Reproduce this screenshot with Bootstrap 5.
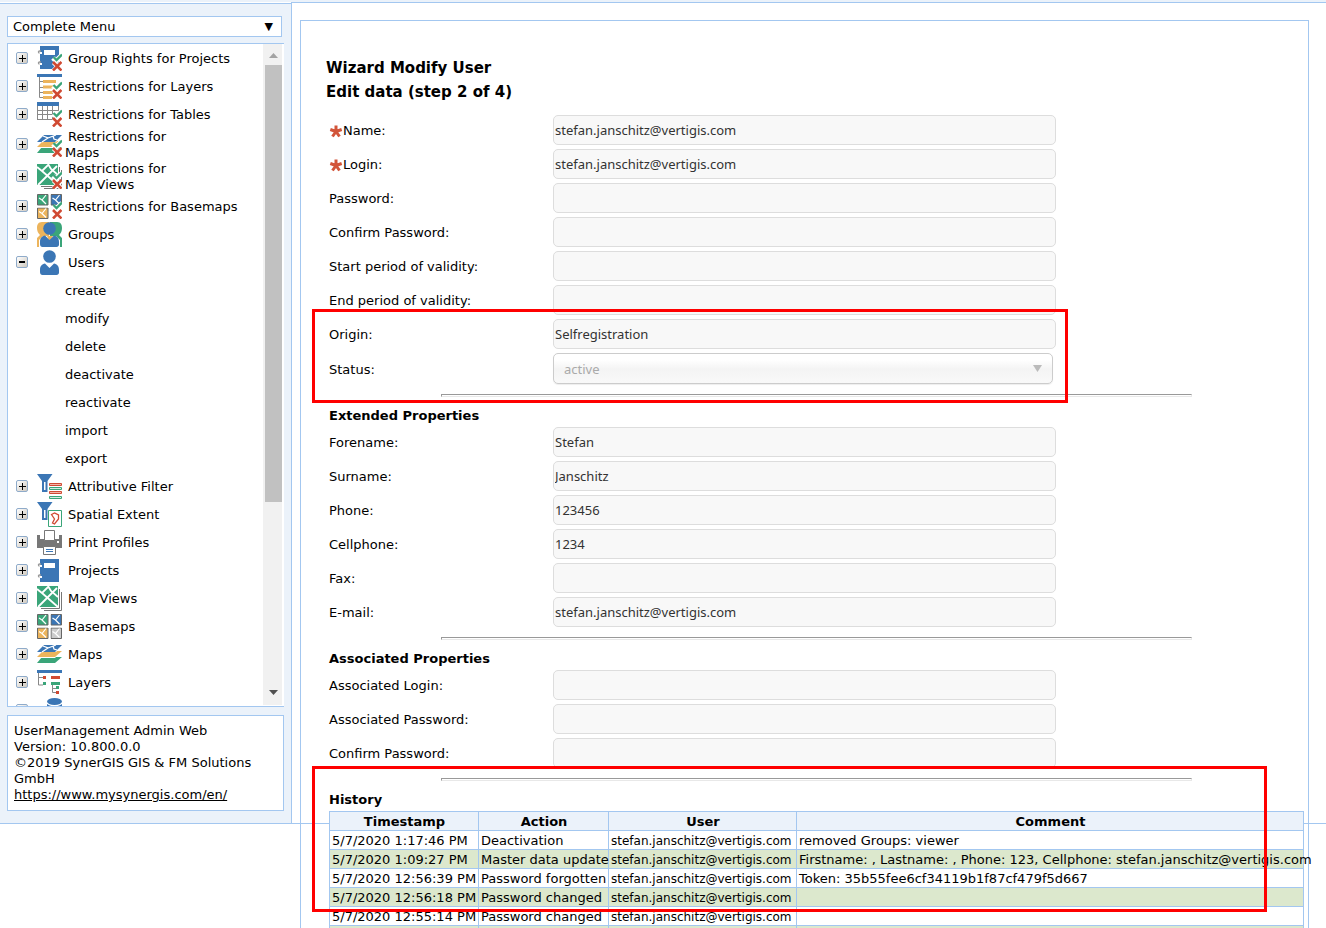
<!DOCTYPE html>
<html lang="en">
<head>
<meta charset="utf-8">
<meta name="viewport" content="width=device-width, initial-scale=1">
<title>UserManagement Admin Web</title>
<link href="https://cdn.jsdelivr.net/npm/bootstrap@5.3.0/dist/css/bootstrap.min.css" rel="stylesheet">
<style>
:root{--line:#a3c7f0;--panel:#ebf2fa}
html,body{height:100vh}
body{font:13px/16px "DejaVu Sans",Verdana,sans-serif;color:#000;background:#fff;overflow:hidden}
.topstrip{height:2px;background:var(--panel)}
.shell{height:calc(100vh - 106px)}
.frame-bottom{border-bottom:1px solid var(--line)}
.side{width:291px;background:var(--panel);padding:12px 7px 12px;margin-top:1px;border-top:1px solid var(--line);flex:none}
.main{border-left:1px solid var(--line);border-top:1px solid var(--line);padding:17px 17px 0 8px;min-width:0}
.panel{border:1px solid var(--line);border-bottom:0;padding:35px 4px 0 25px;min-height:calc(100vh - 20px)}
.menusel{width:275px;height:21px;border:1px solid var(--line);border-radius:0;padding:0 5px;appearance:none;background:#fff;color:#000;font:inherit;display:block}
.menuarrow{right:11px;top:3px;font-size:11px;pointer-events:none}
.box{background:#fff;border:1px solid var(--line)}
.tree{margin:6px 0 8px;min-height:0;border-right:0}
.nodes{overflow:hidden;min-height:0}
.node{height:28px;padding-left:8px;flex:none}
.node.tall{height:32px}
.node a,.leaf{color:#000;text-decoration:none}
.node a{text-indent:3px;margin-left:3px;max-width:180px;padding-top:2px}
.node .ico{margin-left:9px;width:25px;height:25px;flex:none}
.leaf{height:28px;line-height:30px;padding-left:57px;flex:none}
.exp{width:12px;height:12px;padding:0;border:1px solid #8fabca;border-radius:2px;background:linear-gradient(135deg,#fff,#cfc9bf);position:relative;flex:none}
.exp::before,.exp.plus::after{content:"";position:absolute;background:#000;left:2px;top:4px;width:6px;height:2px}
.exp.plus::before{height:1px;left:2px;top:5px;width:7px}
.exp.plus::after{width:1px;height:7px;left:5px;top:2px}
.sbar{width:19px;background:#f1f1f1;margin-bottom:1px;margin-right:2px;padding:0 0 9px 2px}
.thumb{background:#c1c1c1;flex:0 0 67%}
.info{padding:7px 6px}
.info a{color:#000}
h1{font-size:15px;line-height:24px;font-weight:700;margin:0}
h2{font-size:13px;line-height:20px;font-weight:700;margin:0}
.fields{padding:11px 0 0 3px}
.frow{margin-bottom:4px}
.fields label{width:224px;flex:none;padding-top:2px}
.txt{width:503px;height:30px;border:1px solid #ddd;border-radius:5px;background:#f8f8f8;color:#333;font:13px/20px "Noto Sans",sans-serif;padding:0 1px}
.pick{width:500px}
.pick select{width:100%;height:31px;border:1px solid #ccc;border-radius:5px;background:linear-gradient(#fff 20%,#f4f4f4 52%,#f9f9f9);color:#aaa;opacity:1;font:13px/20px "Noto Sans",sans-serif;padding:0 10px;appearance:none;display:block;box-shadow:0 1px 1px #eee}
.pick svg{right:11px;top:12px}
.rule{width:77%;height:3px;margin:10px auto 9px;border:1px solid #e8e8e8;border-top-color:#999;border-left-color:#999;opacity:1;background:#fff}
.sect{padding-bottom:1px}
.mark-red{border:3px solid #f00;left:-17px;pointer-events:none}
.mark-a{top:-10px;width:756px;height:94px}
.mark-b{top:-12px;right:37px;height:146px}
.log{width:100%;table-layout:fixed;border-collapse:collapse;background:#fff}
.log th,.log td{border:1px solid var(--line);padding:2px 1px 0 2px;height:19px;white-space:nowrap;line-height:16px}
.log th{background:var(--panel);text-align:center}
.log td:nth-child(3){font-size:12px}
.log tbody tr:nth-child(even){background:#dce8cd}
.w1{width:149px}.w2{width:130px}.w3{width:188px}
</style>
</head>
<body>
<svg class="d-none" aria-hidden="true">
<defs>
<symbol id="deny" viewBox="0 0 25 25"><path d="M16 12l3 3 6-6" fill="none" stroke="#fff" stroke-width="5"/><path d="M16.500 11l3 3 5.500-5.500" fill="none" stroke="#3aa579" stroke-width="2.300"/><path d="M16.500 16.500l8 8m0-8l-8 8" stroke="#fff" stroke-width="4.500"/><path d="M16 16l8.500 8.500m0-8.500l-8.500 8.500" stroke="#d04a33" stroke-width="2.600"/></symbol>
<symbol id="book" viewBox="0 0 25 25"><path fill="#3b76b5" d="M3 1h19v23H3z"/><path fill="#fff" d="M7 5h11v5H7zM3 7h2v2H3zm0 11h2v2H3z"/><path d="M4 6H2.500a1 1 0 1 0 0 2M4 17H2.500a1 1 0 1 0 0 2" fill="none" stroke="#999" stroke-width="1.400"/></symbol>
<symbol id="rlayers" viewBox="0 0 25 25"><path fill="#3b76b5" d="M0 0h25v3H0z"/><path d="M2.500 3v20.500M2.500 7.500H6M2.500 13.500H6M2.500 23.500H6M2.500 18.500H6" stroke="#888" fill="none"/><path d="M6 7.500h13M6 13h11M6 18.500h10M6 23.500h9" stroke="#ecb45c" stroke-width="3"/></symbol>
<symbol id="rtables" viewBox="0 0 25 25"><path fill="#fff" d="M.5 3h21v14H.5z"/><path d="M.5 4v13.500M5.500 4v13.500M10.500 4v13.500M15.500 4v13.500M21.500 4v10M0 8.500h22M0 12.500h22M0 17.500h16" stroke="#888" fill="none"/><path fill="#3b76b5" d="M0 0h22v4H0z"/></symbol>
<symbol id="maps" viewBox="0 0 25 25"><path fill="#3aa579" d="M5 15h20l-7 6H0z"/><path d="M7 9h18l-7 7H0z" fill="#fff"/><path fill="#ecb45c" d="M6 9h19l-7 6H0z"/><path fill="#fff" d="M6 4h19l-6 6H0z"/><path fill="#3b76b5" d="M7 3h18l-7 7H0z"/><path d="M6 4l5 2-6 4M11 6l8-3M16 4l1 3 3 1" stroke="#fff" stroke-width="1.300" fill="none"/></symbol>
<symbol id="views" viewBox="0 0 25 25"><path d="M22.500 3v19.500H4M24.500 6v18.500H7" fill="none" stroke="#777"/><path fill="#3aa579" d="M0 0h21v21H0z"/><path d="M0 3l5 4 7-7M5 7l16 14M11 0l3 5 7 6M1 21L20 2" fill="none" stroke="#fff" stroke-width="1.800"/></symbol>
<symbol id="tile" viewBox="0 0 12 12"><path d="M.5.5h10.500v10.500H.5z" fill="currentColor" stroke="#666"/><path d="M2 4l3 2 4-5M5 6l4 4" fill="none" stroke="#fff" stroke-width="1.200"/></symbol>
<symbol id="base" viewBox="0 0 25 25"><use href="#tile" width="12" height="12" color="#3aa579"/><use href="#tile" x="13.500" width="12" height="12" color="#3b76b5"/><use href="#tile" y="13.500" width="12" height="12" color="#ecb45c"/><use href="#tile" x="13.500" y="13.500" width="12" height="12" color="#ccc"/></symbol>
<symbol id="base3" viewBox="0 0 25 25"><use href="#tile" width="12" height="12" color="#3aa579"/><use href="#tile" x="13.500" width="12" height="12" color="#3b76b5"/><use href="#tile" y="13.500" width="12" height="12" color="#ecb45c"/></symbol>
<symbol id="user" viewBox="0 0 25 25"><circle cx="12.500" cy="6.500" r="6.300"/><path d="M3 25v-5c0-4 2-6 5-6.500l4.500 4.500 4.500-4.500c3 .5 5 2.500 5 6.500v2.500c0 1.500-1 2.500-2.500 2.500h-14C4 25 3 24 3 22z"/></symbol>
<symbol id="groups" viewBox="0 0 25 25"><path fill="#ecb45c" d="M12 0H5C1 0 0 3 0 6c0 3 1 5 3 7l-3 3v9h12z"/><path fill="#3aa579" d="M13 0h7c4 0 5 3 5 6 0 3-1 5-3 7l3 3v9H13z"/><path fill="#fff" d="M2 25v-7l4-4h13l4 4v7z"/><path fill="#ecb45c" d="M10 14h6l-3.500 6z"/><use href="#user" width="25" height="25" fill="#3b76b5"/></symbol>
<symbol id="funnel" viewBox="0 0 25 25"><path fill="#3b76b5" d="M0 0h15.500L10.500 7v11H5V7z"/><path fill="#fff" d="M7 8h1.500v8H7z"/></symbol>
<symbol id="attr" viewBox="0 0 25 25"><use href="#funnel" width="25" height="25"/><path fill="#fff" d="M12 8h13v17H12z"/><path d="M12.500 9.500h12v2h-12zM12.500 17.500h12v2h-12z" fill="#f0b5aa" stroke="#d04a33"/><path d="M12.500 13.500h12v2h-12zM12.500 22.500h12v2h-12z" fill="#d5eee4" stroke="#3aa579"/></symbol>
<symbol id="spatial" viewBox="0 0 25 25"><use href="#funnel" width="25" height="25"/><path d="M11.500 8.500h13v16h-13z" fill="#fff" stroke="#3aa579"/><path d="M14.500 12.500l3-1.500 4 2v4l-4 5-2-1 2-4z" fill="none" stroke="#d04a33" stroke-width="1.300"/></symbol>
<symbol id="print" viewBox="0 0 25 25"><path fill="#777" d="M0 5h3v4h19V5h3v13H0z"/><path d="M7.500.5h10v10h-10z" fill="#fff" stroke="#777"/><path d="M6.500 16.500h12v8h-12z" fill="#fff" stroke="#777"/><path d="M9 19.500h7M9 21.500h7" stroke="#3b76b5"/><path fill="#fff" d="M20 11h2v2h-2z"/></symbol>
<symbol id="layers" viewBox="0 0 25 25"><path fill="#3b76b5" d="M0 0h25v3H0z"/><path d="M1.500 3v12H6M1.500 7.500H6M15.500 14v8.500H19M15.500 18.500H19" fill="none" stroke="#888"/><path fill="#d04a33" d="M6 6h3v3H6zm8 0h9v3h-9zm5 15h3v3h-3z"/><path fill="#3aa579" d="M6 12h3v3H6zm8 0h9v3h-9zm5 4h3v3h-3z"/></symbol>
<symbol id="db" viewBox="0 0 25 25"><ellipse cx="17.500" cy="3.500" rx="7.500" ry="3.500" fill="#3b76b5"/><path fill="#3b76b5" d="M10 6q7.500 5 15 0v12H10z"/></symbol>
<symbol id="req" viewBox="0 0 13 13"><path d="M6.500 6.500V.5M6.500 6.500L.8 4.500M6.500 6.500l5.700-2M6.500 6.500l-3.500 5M6.500 6.500l3.500 5" stroke="#d2553a" stroke-width="3"/></symbol>
</defs>
</svg>
<div class="topstrip"></div>
<div class="shell d-flex frame-bottom">
<aside class="side d-flex flex-column">
  <div class="position-relative">
    <select class="menusel" aria-label="Menu"><option>Complete Menu</option></select>
    <span class="menuarrow position-absolute" aria-hidden="true">▼</span>
  </div>
  <div class="tree box d-flex flex-fill">
    <nav class="nodes d-flex flex-column flex-fill" aria-label="Administration">
      <div class="node d-flex align-items-center"><button class="exp plus" aria-label="Expand"></button><svg class="ico"><use href="#book" y="-1"/><use href="#deny"/></svg><a href="#">Group Rights for Projects</a></div>
      <div class="node d-flex align-items-center"><button class="exp plus" aria-label="Expand"></button><svg class="ico"><use href="#rlayers"/><use href="#deny"/></svg><a href="#">Restrictions for Layers</a></div>
      <div class="node d-flex align-items-center"><button class="exp plus" aria-label="Expand"></button><svg class="ico"><use href="#rtables"/><use href="#deny"/></svg><a href="#">Restrictions for Tables</a></div>
      <div class="node tall d-flex align-items-center"><button class="exp plus" aria-label="Expand"></button><svg class="ico"><use href="#maps"/><use href="#deny"/></svg><a href="#">Restrictions for<br>Maps</a></div>
      <div class="node tall d-flex align-items-center"><button class="exp plus" aria-label="Expand"></button><svg class="ico"><use href="#views"/><use href="#deny"/></svg><a href="#">Restrictions for<br>Map Views</a></div>
      <div class="node d-flex align-items-center"><button class="exp plus" aria-label="Expand"></button><svg class="ico"><use href="#base3"/><use href="#deny"/></svg><a href="#">Restrictions for Basemaps</a></div>
      <div class="node d-flex align-items-center"><button class="exp plus" aria-label="Expand"></button><svg class="ico"><use href="#groups"/></svg><a href="#">Groups</a></div>
      <div class="node d-flex align-items-center"><button class="exp" aria-label="Collapse"></button><svg class="ico" fill="#3b76b5"><use href="#user"/></svg><a href="#">Users</a></div>
      <a class="leaf" href="#">create</a>
      <a class="leaf" href="#">modify</a>
      <a class="leaf" href="#">delete</a>
      <a class="leaf" href="#">deactivate</a>
      <a class="leaf" href="#">reactivate</a>
      <a class="leaf" href="#">import</a>
      <a class="leaf" href="#">export</a>
      <div class="node d-flex align-items-center"><button class="exp plus" aria-label="Expand"></button><svg class="ico"><use href="#attr"/></svg><a href="#">Attributive Filter</a></div>
      <div class="node d-flex align-items-center"><button class="exp plus" aria-label="Expand"></button><svg class="ico"><use href="#spatial"/></svg><a href="#">Spatial Extent</a></div>
      <div class="node d-flex align-items-center"><button class="exp plus" aria-label="Expand"></button><svg class="ico"><use href="#print"/></svg><a href="#">Print Profiles</a></div>
      <div class="node d-flex align-items-center"><button class="exp plus" aria-label="Expand"></button><svg class="ico"><use href="#book"/></svg><a href="#">Projects</a></div>
      <div class="node d-flex align-items-center"><button class="exp plus" aria-label="Expand"></button><svg class="ico"><use href="#views"/></svg><a href="#">Map Views</a></div>
      <div class="node d-flex align-items-center"><button class="exp plus" aria-label="Expand"></button><svg class="ico"><use href="#base"/></svg><a href="#">Basemaps</a></div>
      <div class="node d-flex align-items-center"><button class="exp plus" aria-label="Expand"></button><svg class="ico"><use href="#maps"/></svg><a href="#">Maps</a></div>
      <div class="node d-flex align-items-center"><button class="exp plus" aria-label="Expand"></button><svg class="ico"><use href="#layers"/></svg><a href="#">Layers</a></div>
      <div class="node d-flex align-items-center"><button class="exp plus" aria-label="Expand"></button><svg class="ico"><use href="#db"/></svg></div>
    </nav>
    <div class="sbar d-flex flex-column" aria-hidden="true">
      <svg width="17" height="21" class="flex-shrink-0"><path d="M4 14h9l-4.500-5z" fill="#a3a3a3"/></svg>
      <div class="thumb"></div>
      <svg width="17" height="6" class="flex-shrink-0 mt-auto"><path d="M4 0h9L8.500 5z" fill="#505050"/></svg>
    </div>
  </div>
  <div class="info box">UserManagement Admin Web<br>Version: 10.800.0.0<br>©2019 SynerGIS GIS &amp; FM Solutions GmbH<br><a href="#">https://www.mysynergis.com/en/</a></div>
</aside>
<main class="main flex-fill">
  <form class="panel">
    <h1>Wizard Modify User<br>Edit data (step 2 of 4)</h1>
    <div class="fields">
      <div class="frow d-flex align-items-center"><label for="f1" class="d-flex align-items-center"><svg width="14" height="13"><use href="#req"/></svg>Name:</label><input class="txt" id="f1" readonly value="stefan.janschitz@vertigis.com"></div>
      <div class="frow d-flex align-items-center"><label for="f2" class="d-flex align-items-center"><svg width="14" height="13"><use href="#req"/></svg>Login:</label><input class="txt" id="f2" readonly value="stefan.janschitz@vertigis.com"></div>
      <div class="frow d-flex align-items-center"><label for="f3">Password:</label><input class="txt" id="f3" type="password" readonly></div>
      <div class="frow d-flex align-items-center"><label for="f4">Confirm Password:</label><input class="txt" id="f4" type="password" readonly></div>
      <div class="frow d-flex align-items-center"><label for="f5">Start period of validity:</label><input class="txt" id="f5" readonly></div>
      <div class="frow d-flex align-items-center"><label for="f6">End period of validity:</label><input class="txt" id="f6" readonly></div>
      <div class="position-relative">
        <div class="frow d-flex align-items-center"><label for="f7">Origin:</label><input class="txt" id="f7" readonly value="Selfregistration"></div>
        <div class="d-flex align-items-center"><label for="f8">Status:</label><div class="pick position-relative"><select id="f8" disabled><option>active</option></select><svg class="position-absolute" width="9" height="8" aria-hidden="true"><path d="M0 0h9L4.500 7z" fill="#bbb"/></svg></div></div>
        <hr class="rule">
        <div class="mark-red mark-a position-absolute"></div>
      </div>
      <h2 class="sect">Extended Properties</h2>
      <div class="frow d-flex align-items-center"><label for="g1">Forename:</label><input class="txt" id="g1" readonly value="Stefan"></div>
      <div class="frow d-flex align-items-center"><label for="g2">Surname:</label><input class="txt" id="g2" readonly value="Janschitz"></div>
      <div class="frow d-flex align-items-center"><label for="g3">Phone:</label><input class="txt" id="g3" readonly value="123456"></div>
      <div class="frow d-flex align-items-center"><label for="g4">Cellphone:</label><input class="txt" id="g4" readonly value="1234"></div>
      <div class="frow d-flex align-items-center"><label for="g5">Fax:</label><input class="txt" id="g5" readonly></div>
      <div class="d-flex align-items-center"><label for="g6">E-mail:</label><input class="txt" id="g6" readonly value="stefan.janschitz@vertigis.com"></div>
      <hr class="rule">
      <h2 class="sect">Associated Properties</h2>
      <div class="frow d-flex align-items-center"><label for="h1">Associated Login:</label><input class="txt" id="h1" readonly></div>
      <div class="frow d-flex align-items-center"><label for="h2">Associated Password:</label><input class="txt" id="h2" type="password" readonly></div>
      <div class="d-flex align-items-center"><label for="h3">Confirm Password:</label><input class="txt" id="h3" type="password" readonly></div>
      <div class="position-relative">
        <hr class="rule">
        <h2 class="sect">History</h2>
        <table class="log">
          <colgroup><col class="w1"><col class="w2"><col class="w3"><col></colgroup>
          <thead><tr><th>Timestamp</th><th>Action</th><th>User</th><th>Comment</th></tr></thead>
          <tbody>
            <tr><td>5/7/2020 1:17:46 PM</td><td>Deactivation</td><td>stefan.janschitz@vertigis.com</td><td>removed Groups: viewer</td></tr>
            <tr><td>5/7/2020 1:09:27 PM</td><td>Master data update</td><td>stefan.janschitz@vertigis.com</td><td>Firstname: , Lastname: , Phone: 123, Cellphone: stefan.janschitz@vertigis.com</td></tr>
            <tr><td>5/7/2020 12:56:39 PM</td><td>Password forgotten</td><td>stefan.janschitz@vertigis.com</td><td>Token: 35b55fee6cf34119b1f87cf479f5d667</td></tr>
            <tr><td>5/7/2020 12:56:18 PM</td><td>Password changed</td><td>stefan.janschitz@vertigis.com</td><td></td></tr>
            <tr><td>5/7/2020 12:55:14 PM</td><td>Password changed</td><td>stefan.janschitz@vertigis.com</td><td></td></tr>
            <tr><td></td><td></td><td></td><td></td></tr>
          </tbody>
        </table>
        <div class="mark-red mark-b position-absolute"></div>
      </div>
    </div>
  </form>
</main>
</div>
<script src="https://cdn.jsdelivr.net/npm/bootstrap@5.3.0/dist/js/bootstrap.bundle.min.js"></script>
</body>
</html>
